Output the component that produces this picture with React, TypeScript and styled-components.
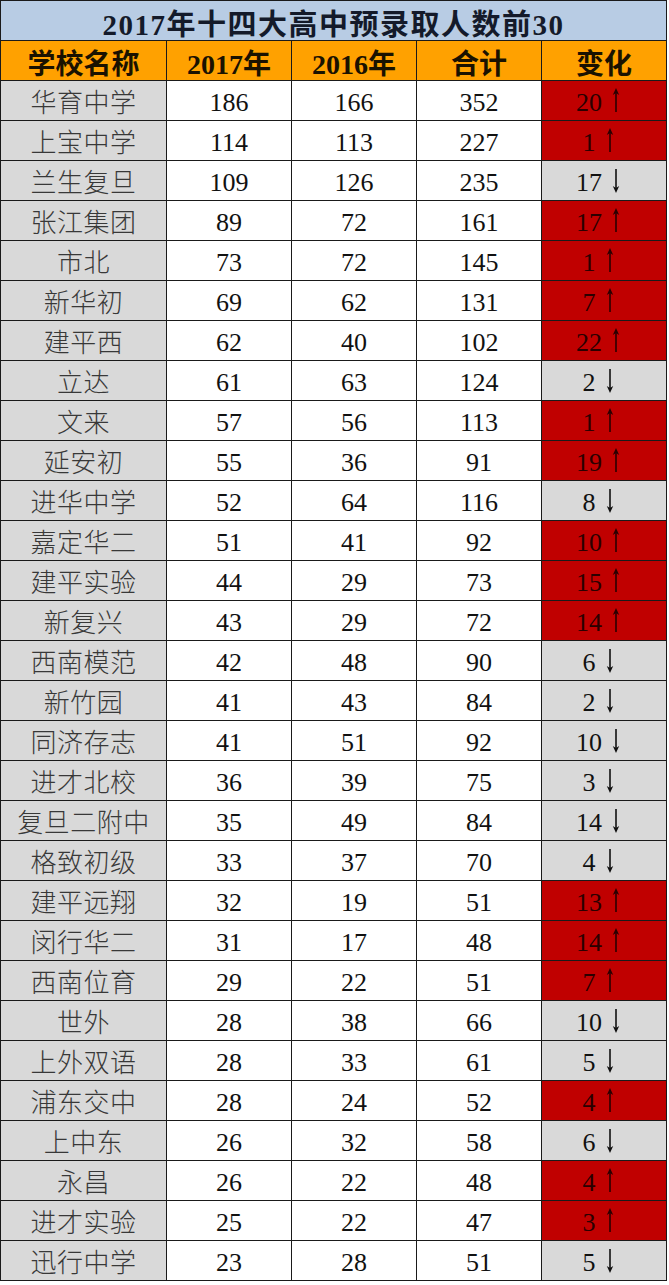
import React from 'react';
import styled, { createGlobalStyle } from 'styled-components';

const GlobalStyle = createGlobalStyle`
  html, body {
    margin: 0;
    padding: 0;
    background: #ffffff;
  }
`;

type Row = [string, number, number, number, number, boolean];

const rows: Row[] = [
  ['华育中学', 186, 166, 352, 20, true],
  ['上宝中学', 114, 113, 227, 1, true],
  ['兰生复旦', 109, 126, 235, 17, false],
  ['张江集团', 89, 72, 161, 17, true],
  ['市北', 73, 72, 145, 1, true],
  ['新华初', 69, 62, 131, 7, true],
  ['建平西', 62, 40, 102, 22, true],
  ['立达', 61, 63, 124, 2, false],
  ['文来', 57, 56, 113, 1, true],
  ['延安初', 55, 36, 91, 19, true],
  ['进华中学', 52, 64, 116, 8, false],
  ['嘉定华二', 51, 41, 92, 10, true],
  ['建平实验', 44, 29, 73, 15, true],
  ['新复兴', 43, 29, 72, 14, true],
  ['西南模范', 42, 48, 90, 6, false],
  ['新竹园', 41, 43, 84, 2, false],
  ['同济存志', 41, 51, 92, 10, false],
  ['进才北校', 36, 39, 75, 3, false],
  ['复旦二附中', 35, 49, 84, 14, false],
  ['格致初级', 33, 37, 70, 4, false],
  ['建平远翔', 32, 19, 51, 13, true],
  ['闵行华二', 31, 17, 48, 14, true],
  ['西南位育', 29, 22, 51, 7, true],
  ['世外', 28, 38, 66, 10, false],
  ['上外双语', 28, 33, 61, 5, false],
  ['浦东交中', 28, 24, 52, 4, true],
  ['上中东', 26, 32, 58, 6, false],
  ['永昌', 26, 22, 48, 4, true],
  ['进才实验', 25, 22, 47, 3, true],
  ['迅行中学', 23, 28, 51, 5, false],
];

const Sheet = styled.div`
  display: grid;
  grid-template-columns: 165px repeat(4, 124px);
  grid-auto-rows: 39px;
  gap: 1px;
  padding: 1px;
  width: 665px;
  background: #1a1a1a;
  font-family: "Liberation Serif", "Noto Sans CJK SC", serif;
`;

const Cell = styled.div`
  display: flex;
  align-items: center;
  justify-content: center;
  font-size: 26px;
  color: #111;
  background: #ffffff;
  padding-top: 4px;
  box-sizing: border-box;
`;

const Title = styled(Cell)`
  grid-column: 1 / -1;
  background: #b8cce4;
  font-size: 29px;
  font-weight: 700;
  letter-spacing: 1.5px;
  color: #141a2a;
  padding-top: 2px;
`;

const Head = styled(Cell)`
  background: #ffa100;
  font-size: 28px;
  font-weight: 700;
  color: #1a1200;
  padding-top: 2px;
`;

const Name = styled(Cell)`
  background: #d9d9d9;
  color: #383838;
  letter-spacing: 0.5px;
  font-weight: 300;
  padding-top: 0;
`;

const Num = styled(Cell)``;

const Change = styled(Cell)<{ $up: boolean }>`
  background: ${p => (p.$up ? '#c00000' : '#d9d9d9')};
  color: ${p => (p.$up ? '#2a0000' : '#111')};
  gap: 10px;
  padding-right: 12px;
`;

const Arrow = ({ up }: { up: boolean }) => (
  <svg width="8" height="25" viewBox="0 0 8 25" style={{ marginTop: -4 }}>
    {up ? (
      <>
        <line x1="4" y1="2" x2="4" y2="24" stroke="currentColor" strokeWidth="1.6" />
        <path d="M4 0 L7.2 7 L4 5 L0.8 7 Z" fill="currentColor" />
      </>
    ) : (
      <>
        <line x1="4" y1="1" x2="4" y2="23" stroke="currentColor" strokeWidth="1.6" />
        <path d="M4 25 L7.2 18 L4 20 L0.8 18 Z" fill="currentColor" />
      </>
    )}
  </svg>
);

export default function App() {
  return (
    <>
      <GlobalStyle />
      <Sheet>
        <Title>2017年十四大高中预录取人数前30</Title>
        <Head>学校名称</Head>
        <Head>2017年</Head>
        <Head>2016年</Head>
        <Head>合计</Head>
        <Head>变化</Head>
        {rows.map(([name, a, b, total, diff, up]) => (
          <React.Fragment key={name}>
            <Name>{name}</Name>
            <Num>{a}</Num>
            <Num>{b}</Num>
            <Num>{total}</Num>
            <Change $up={up}>
              <span>{diff}</span>
              <Arrow up={up} />
            </Change>
          </React.Fragment>
        ))}
      </Sheet>
    </>
  );
}
